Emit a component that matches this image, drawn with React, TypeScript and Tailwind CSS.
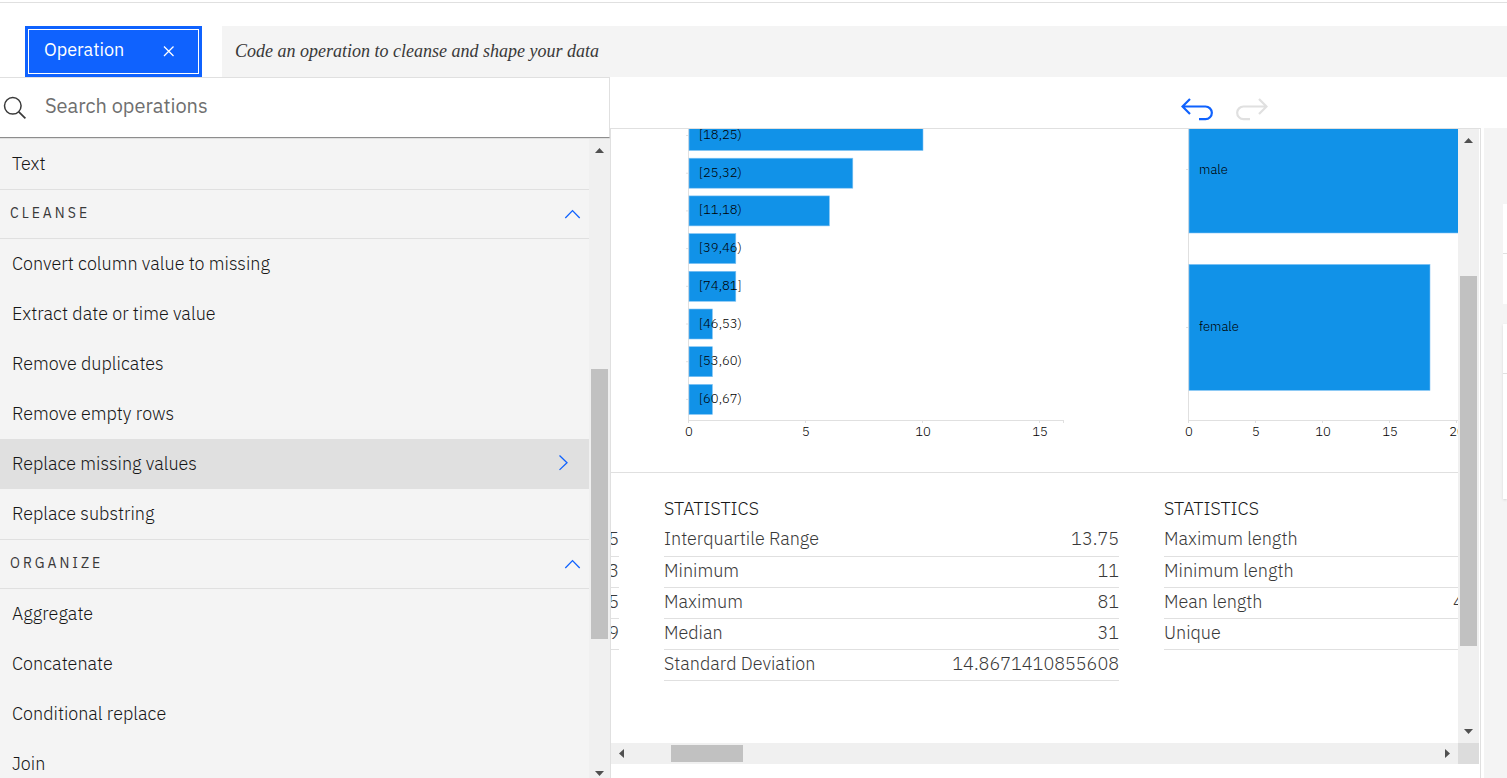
import React from "react";

type Bar = { label: string; value: number };

const ageBars: Bar[] = [
  { label: "[18,25)", value: 10 },
  { label: "[25,32)", value: 7 },
  { label: "[11,18)", value: 6 },
  { label: "[39,46)", value: 2 },
  { label: "[74,81]", value: 2 },
  { label: "[46,53)", value: 1 },
  { label: "[53,60)", value: 1 },
  { label: "[60,67)", value: 1 },
];

const cleanse = [
  "Convert column value to missing",
  "Extract date or time value",
  "Remove duplicates",
  "Remove empty rows",
  "Replace missing values",
  "Replace substring",
];

const organize = ["Aggregate", "Concatenate", "Conditional replace", "Join"];

function Arrow({ dir }: { dir: "up" | "down" | "left" | "right" }) {
  const points = {
    up: "0,7 4.5,2 9,7",
    down: "0,2 9,2 4.5,7",
    left: "7,0 7,9 2,4.5",
    right: "2,0 7,4.5 2,9",
  }[dir];
  return (
    <svg width="9" height="9" viewBox="0 0 9 9" className="shrink-0" aria-hidden="true">
      <polygon points={points} fill="#505050" />
    </svg>
  );
}

function Row({ name, active = false }: { name: string; active?: boolean }) {
  return (
    <li>
      <button
        type="button"
        className={
          active
            ? "flex h-[50px] w-full items-center justify-between bg-[#e0e0e0] pr-5 pb-0.5 pl-3 text-left"
            : "flex h-[50px] w-full items-center justify-between pr-5 pb-0.5 pl-3 text-left"
        }
      >
        {name}
        {active && (
          <svg width="12" height="16" viewBox="0 0 12 16" fill="none" aria-hidden="true">
            <path d="M2.5 .5 10 7.7 2.5 14.9" stroke="#0f62fe" strokeWidth="1.3" />
          </svg>
        )}
      </button>
    </li>
  );
}

function Section({ title, items, active }: { title: string; items: string[]; active?: string }) {
  return (
    <section>
      <button
        type="button"
        className="flex h-[50px] w-full items-center justify-between border-y border-[#e0e0e0] pr-2 pb-0.5 pl-2.5 text-[14px] font-normal tracking-[3px] text-[#393939]"
      >
        {title}
        <svg width="17" height="10" viewBox="0 0 17 10" fill="none" className="mt-0.5" aria-hidden="true">
          <path d="M1.3 9 8.5 1.6 15.7 9" stroke="#0f62fe" strokeWidth="1.3" />
        </svg>
      </button>
      <ul>
        {items.map((name) => (
          <Row key={name} name={name} active={name === active} />
        ))}
      </ul>
    </section>
  );
}

function Axis({ unit, end, ticks }: { unit: number; end: number; ticks: number[] }) {
  return (
    <g>
      <path d={`M24.5 0V291.5H${end}`} fill="none" stroke="#e0e0e0" />
      {ticks.map((t) => (
        <g key={t}>
          <line x1={24.5 + t * unit} x2={24.5 + t * unit} y1="291" y2="294" stroke="#e0e0e0" />
          <text x={25 + t * unit} y="307" textAnchor="middle" fontSize="13" fill="#000000">
            {t}
          </text>
        </g>
      ))}
    </g>
  );
}

function AgeChart() {
  return (
    <svg width="455" height="343" viewBox="0 0 455 343" className="block" role="img" aria-label="[18,25)">
      <Axis unit={23.4} end={400} ticks={[0, 5, 10, 15]} />
      <line x1="399.5" x2="399.5" y1="291" y2="294" stroke="#e0e0e0" />
      {ageBars.map((bar, i) => {
        const y = -8.5 + i * 37.7;
        return (
          <g key={bar.label}>
            <line x1="22" x2="25" y1={y + 15} y2={y + 15} stroke="#e0e0e0" />
            <rect x="25" y={y} width={bar.value * 23.4} height="30" fill="#1192e8" stroke="#82c4f3" strokeWidth="0.6" />
            <text x="35" y={y + 18.5} fontSize="13" fill="#000000">
              {bar.label}
            </text>
          </g>
        );
      })}
    </svg>
  );
}

function SexChart() {
  return (
    <svg width="455" height="343" viewBox="0 0 455 343" className="block" role="img" aria-label="male, female">
      <Axis unit={13.4} end={400} ticks={[0, 5, 10, 15, 20]} />
      <line x1="22" x2="25" y1="40.5" y2="40.5" stroke="#e0e0e0" />
      <line x1="22" x2="25" y1="198.5" y2="198.5" stroke="#e0e0e0" />
      <rect x="25" y="-22" width="360" height="126" fill="#1192e8" stroke="#82c4f3" strokeWidth="0.6" />
      <rect x="25" y="135.4" width="241" height="126" fill="#1192e8" stroke="#82c4f3" strokeWidth="0.6" />
      <text x="35" y="45" fontSize="13" fill="#000000">male</text>
      <text x="35" y="202" fontSize="13" fill="#000000">female</text>
    </svg>
  );
}

function Stats({ title, rows, wideValues = false }: { title: string; rows: [string, string][]; wideValues?: boolean }) {
  return (
    <table className="w-full table-fixed border-collapse text-left text-[18px] leading-6 text-[#393939]">
      <caption className="h-8 pt-1 text-left text-[#161616]">{title}</caption>
      <tbody>
        {rows.map(([label, value], i) => (
          <tr key={i} className="h-[31px] border-b border-[#e0e0e0]">
            <th scope="row" className={wideValues ? "w-[289px] p-0 pb-0.5 font-light" : "w-1/2 p-0 pb-0.5 font-light"}>
              {label}
            </th>
            <td className={wideValues ? "p-0 pb-0.5" : "p-0 pb-0.5 text-right"}>{value}</td>
          </tr>
        ))}
      </tbody>
    </table>
  );
}

const columns = [
  { chart: null, title: "", wide: false, rows: [["", "5"], ["", "3"], ["", "5"], ["", "9"]] },
  {
    chart: <AgeChart />,
    title: "STATISTICS",
    wide: false,
    rows: [
      ["Interquartile Range", "13.75"],
      ["Minimum", "11"],
      ["Maximum", "81"],
      ["Median", "31"],
      ["Standard Deviation", "14.8671410855608"],
    ],
  },
  {
    chart: <SexChart />,
    title: "STATISTICS",
    wide: true,
    rows: [["Maximum length", ""], ["Minimum length", ""], ["Mean length", "4"], ["Unique", ""]],
  },
] as { chart: React.ReactNode; title: string; wide: boolean; rows: [string, string][] }[];

export default function App() {
  return (
    <div className="flex h-screen flex-col overflow-hidden bg-white font-['IBM_Plex_Sans',Roboto,sans-serif] text-[18px] font-light text-[#161616]">
      <header className="mt-0.5 flex shrink-0 border-t border-[#e0e0e0] pt-[23px] pl-[25px]">
        <button
          type="button"
          className="flex h-[51px] w-[177px] shrink-0 bg-[#0f62fe] p-[3px] font-normal text-white"
        >
          <span className="flex h-full w-full items-center justify-between border border-white pr-6 pb-1 pl-[15px]">
            Operation
            <svg width="11" height="11" viewBox="0 0 11 11" fill="none" className="mt-1" aria-hidden="true">
              <path d="M1 .5 10.5 10M10.5.5 1 10" stroke="white" strokeWidth="1.3" />
            </svg>
          </span>
        </button>
        <input
          aria-label="Code an operation to cleanse and shape your data"
          placeholder="Code an operation to cleanse and shape your data"
          className="ml-5 h-[51px] min-w-0 flex-1 bg-[#f4f4f4] px-[13px] font-['Liberation_Serif',serif] text-[18px] font-normal italic outline-none placeholder:text-[#393939]"
        />
      </header>

      <div className="flex min-h-0 flex-1">
        <aside className="flex w-[610px] shrink-0 flex-col">
          <label className="flex h-[61px] shrink-0 items-center border border-l-0 border-[#e0e0e0] border-b-[#8d8d8d] pl-[3px]">
            <svg width="24" height="24" viewBox="0 0 24 24" fill="none" className="shrink-0" aria-hidden="true">
              <circle cx="9.8" cy="9.8" r="8.3" stroke="#393939" strokeWidth="1.5" />
              <path d="M15.8 15.8 22.4 22.4" stroke="#393939" strokeWidth="1.7" />
            </svg>
            <input
              type="text"
              aria-label="Search operations"
              placeholder="Search operations"
              className="ml-[18px] min-w-0 flex-1 bg-transparent pb-1 text-[20px] font-normal outline-none placeholder:text-[#6f6f6f]"
            />
          </label>
          <div className="flex min-h-0 flex-1 border-t border-[#e0e0e0] bg-[#f4f4f4]">
            <nav className="min-w-0 flex-1 overflow-hidden">
              <ul>
                <Row name="Text" />
              </ul>
              <Section title="CLEANSE" items={cleanse} active="Replace missing values" />
              <Section title="ORGANIZE" items={organize} />
            </nav>
            <div className="flex w-[21px] flex-col items-center justify-between bg-[#f0f0f0] pt-[7px]">
              <Arrow dir="up" />
              <div className="mt-[84px] h-[270px] w-[17px] bg-[#c1c1c1]" />
              <Arrow dir="down" />
            </div>
          </div>
        </aside>

        <main className="flex min-w-0 flex-1 flex-col">
          <div className="flex h-[51px] shrink-0 justify-end gap-[23px] pt-[21px] pr-[239px]">
            <button type="button" aria-label="Undo" className="h-[23px] w-8">
              <svg width="32" height="23" viewBox="0 0 32 23" fill="none" aria-hidden="true">
                <path d="M9 1 1.5 8.5 9 16M1.5 8.5H24.5A6.2 6.2 0 0 1 24.5 21.2H18" stroke="#0f62fe" strokeWidth="2.2" />
              </svg>
            </button>
            <button type="button" aria-label="Redo" disabled className="h-[23px] w-8">
              <svg width="32" height="23" viewBox="0 0 32 23" fill="none" aria-hidden="true">
                <path d="M23 1 30.5 8.5 23 16M30.5 8.5H7.5A6.2 6.2 0 0 0 7.5 21.2H14" stroke="#e0e0e0" strokeWidth="2.2" />
              </svg>
            </button>
          </div>

          <div className="flex min-h-0 flex-1">
            <div className="mr-[3px] flex min-w-0 flex-1 flex-col border border-b-0 border-[#e0e0e0] pr-px pb-3.5">
              <div className="flex min-h-0 flex-1">
                <div className="min-w-0 flex-1 overflow-hidden">
                  <div className="-ml-[447px] flex w-[1500px] gap-[45px]">
                    {columns.map((c, i) => (
                      <div key={i} className="h-[343px] w-[455px] shrink-0">
                        {c.chart}
                      </div>
                    ))}
                  </div>
                  <div className="-ml-[447px] flex w-[1500px] items-start gap-[45px] border-t border-[#e0e0e0] pt-5">
                    {columns.map((c, i) => (
                      <div key={i} className="w-[455px] shrink-0">
                        <Stats title={c.title} rows={c.rows} wideValues={c.wide} />
                      </div>
                    ))}
                  </div>
                </div>
                <div className="flex w-[21px] flex-col items-center justify-between bg-[#f0f0f0] py-[7px]">
                  <Arrow dir="up" />
                  <div className="mt-[50px] h-[370px] w-[17px] bg-[#c1c1c1]" />
                  <Arrow dir="down" />
                </div>
              </div>
              <div className="flex h-[21px] shrink-0">
                <div className="flex min-w-0 flex-1 items-center bg-[#f0f0f0] px-[6px]">
                  <Arrow dir="left" />
                  <div className="mr-auto ml-[45px] h-[17px] w-[72px] bg-[#c1c1c1]" />
                  <Arrow dir="right" />
                </div>
                <div className="w-[21px] bg-[#dcdcdc]" />
              </div>
            </div>

            <div className="flex w-[23px] shrink-0 flex-col gap-5 overflow-hidden bg-[#f4f4f4] pt-[76px] pl-[19px]">
              <div className="h-[100px] bg-white">
                <div className="h-[50px] border-b border-[#e0e0e0]" />
              </div>
              <div className="h-[175px] bg-white shadow">
                <div className="h-[50px] border-b border-[#e0e0e0]" />
              </div>
            </div>
          </div>
        </main>
      </div>
    </div>
  );
}
